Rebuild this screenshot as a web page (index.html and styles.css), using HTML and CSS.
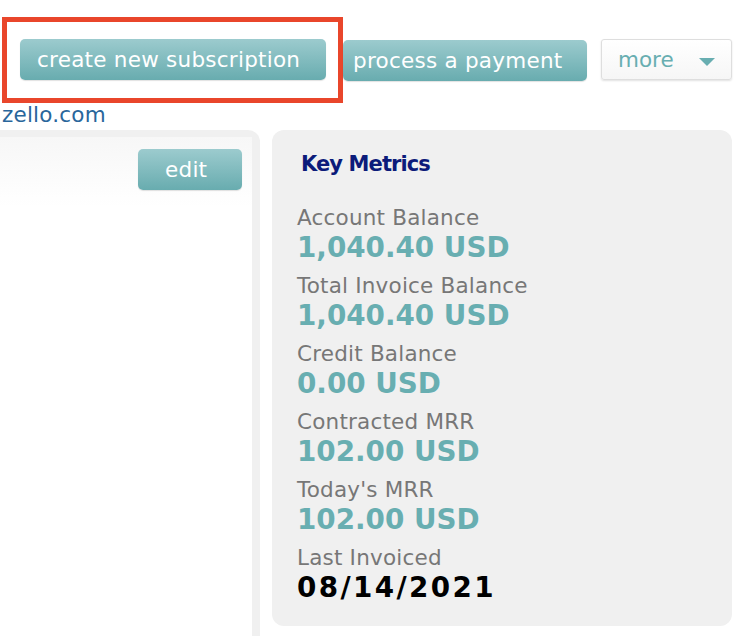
FILE: index.html
```html
<!DOCTYPE html>
<html lang="en">
<head>
<meta charset="utf-8">
<title>Customer account</title>
<link rel="stylesheet" href="styles.css">
</head>
<body>
<div class="page">
  <div class="toolbar">
    <div class="highlight">
      <button class="btn btn-create">create new subscription</button>
    </div>
    <button class="btn btn-process">process a payment</button>
    <button class="btn-more"><span>more</span><span class="caret"></span></button>
  </div>
  <div class="email">zello.com</div>
  <div class="main">
    <div class="left-panel">
      <div class="left-inner">
        <button class="btn btn-edit">edit</button>
      </div>
    </div>
    <div class="metrics">
      <h2 class="metrics-title">Key Metrics</h2>
      <div class="metric">
        <div class="metric-label">Account Balance</div>
        <div class="metric-value">1,040.40 USD</div>
      </div>
      <div class="metric">
        <div class="metric-label">Total Invoice Balance</div>
        <div class="metric-value">1,040.40 USD</div>
      </div>
      <div class="metric">
        <div class="metric-label">Credit Balance</div>
        <div class="metric-value">0.00 USD</div>
      </div>
      <div class="metric">
        <div class="metric-label">Contracted MRR</div>
        <div class="metric-value">102.00 USD</div>
      </div>
      <div class="metric">
        <div class="metric-label">Today's MRR</div>
        <div class="metric-value">102.00 USD</div>
      </div>
      <div class="metric">
        <div class="metric-label">Last Invoiced</div>
        <div class="metric-value metric-date">08/14/2021</div>
      </div>
    </div>
  </div>
</div>
</body>
</html>
```

FILE: styles.css
```css
* {
  box-sizing: border-box;
}

html, body {
  margin: 0;
  padding: 0;
  background: #ffffff;
  overflow: hidden;
}

body {
  font-family: "DejaVu Sans", Verdana, sans-serif;
  font-size: 21.5px;
  width: 752px;
  height: 636px;
}

.toolbar {
  display: flex;
  align-items: center;
  padding: 17px 0 0 2px;
}

.highlight {
  border: 5px solid #e9462b;
  padding: 17px 12px 18px 13px;
}

.btn {
  display: block;
  height: 41px;
  margin: 0;
  border: 0;
  border-radius: 5px;
  background: linear-gradient(#9ccbce, #68acaf);
  box-shadow: 0 1px 1px rgba(0, 0, 0, 0.12);
  color: #ffffff;
  font-family: "DejaVu Sans", Verdana, sans-serif;
  font-size: 21.5px;
  line-height: 41px;
  letter-spacing: 0.25px;
  text-align: left;
  white-space: nowrap;
  padding: 0;
}

.btn-create {
  width: 306px;
  padding-left: 17px;
}

.btn-process {
  width: 244px;
  padding-left: 10px;
}

.btn-edit {
  width: 104px;
  padding-left: 27px;
}

.btn-more {
  display: flex;
  align-items: center;
  width: 131px;
  height: 41px;
  margin: -2px 0 0 14px;
  padding: 0 0 0 16px;
  border: 1px solid #dedede;
  border-radius: 3px;
  background: linear-gradient(#ffffff, #f6f6f6);
  box-shadow: 0 1px 2px rgba(0, 0, 0, 0.12);
  color: #68aeb1;
  font-family: "DejaVu Sans", Verdana, sans-serif;
  font-size: 21.5px;
  line-height: 39px;
}

.caret {
  width: 0;
  height: 0;
  margin: 5px 0 0 25px;
  border-left: 8px solid transparent;
  border-right: 8px solid transparent;
  border-top: 8px solid #68aeb1;
}

.email {
  padding-left: 2px;
  line-height: 24px;
  letter-spacing: 0.2px;
  color: #29669b;
}

.main {
  display: flex;
  align-items: flex-start;
  gap: 12px;
  margin-top: 3px;
}

.left-panel {
  width: 260px;
  height: 520px;
  padding: 7px 8px 0 0;
  background: #f0f0f0;
  border-top-right-radius: 12px;
}

.left-inner {
  display: flex;
  justify-content: flex-end;
  align-items: flex-start;
  height: 100%;
  padding: 12px 10px 0 0;
  background: linear-gradient(#f7f7f7, #ffffff 70px);
}

.metrics {
  width: 460px;
  height: 496px;
  padding: 20px 25px;
  background: #f0f0f0;
  border-radius: 12px;
}

.metrics-title {
  margin: 0 0 26px 4px;
  font-size: 21px;
  line-height: 28px;
  font-weight: bold;
  letter-spacing: -0.9px;
  color: #0c1b7a;
}

.metric {
  margin-bottom: 8px;
}

.metric-label {
  font-size: 21.5px;
  line-height: 28px;
  letter-spacing: 0.2px;
  color: #777777;
}

.metric-value {
  font-size: 27.8px;
  line-height: 32px;
  font-weight: bold;
  color: #68aeb1;
}

.metric-date {
  color: #000000;
  letter-spacing: 2.4px;
}
```
